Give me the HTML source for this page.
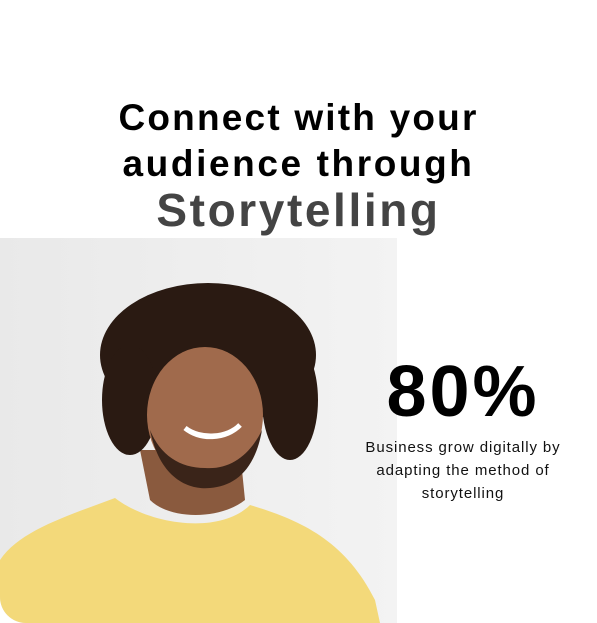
<!DOCTYPE html>
<html><head><style>
html,body{margin:0;padding:0;background:#fff;width:597px;height:623px;overflow:hidden;position:relative;font-family:"Liberation Sans",sans-serif}
.h{position:absolute;left:0;width:597px;text-align:center;font-weight:bold;color:#000;white-space:nowrap}
</style></head><body>
<div style="position:absolute;left:0;top:238px;width:397px;height:385px;background:#eeeeee;border-bottom-left-radius:26px;overflow:hidden">
<svg width="397" height="385" viewBox="0 238 397 385">
<defs><linearGradient id="bg" x1="0" x2="1"><stop offset="0" stop-color="#e9e9e9"/><stop offset="1" stop-color="#f3f3f3"/></linearGradient></defs>
<rect x="0" y="238" width="397" height="385" fill="url(#bg)"/>
<path d="M0 560 C20 530 70 515 115 498 C150 525 220 535 250 505 C300 520 345 540 375 600 L380 623 L0 623 Z" fill="#f3d97a"/>
<path d="M140 450 L150 500 C170 520 220 520 245 500 L240 450 Z" fill="#8a5a3e"/>
<ellipse cx="208" cy="355" rx="108" ry="72" fill="#2a1a12"/>
<ellipse cx="130" cy="400" rx="28" ry="55" fill="#2a1a12"/>
<ellipse cx="290" cy="400" rx="28" ry="60" fill="#2a1a12"/>
<ellipse cx="205" cy="415" rx="58" ry="68" fill="#a06a4c"/>
<path d="M150 430 C160 480 190 490 210 488 C235 486 255 470 262 430 C250 455 230 470 205 468 C180 468 160 455 150 430 Z" fill="#3a2419"/>
<path d="M185 428 C200 440 225 440 240 425 C228 438 200 440 185 428 Z" fill="#fff" stroke="#fff" stroke-width="5"/>
</svg>
</div>
<div class="h" style="top:96px;font-size:37px;line-height:44px;letter-spacing:2.2px">Connect with your</div>
<div class="h" style="top:142px;font-size:37px;line-height:44px;letter-spacing:2.6px">audience through</div>
<div class="h" style="top:183px;font-size:46px;line-height:54px;color:#444;letter-spacing:2.6px">Storytelling</div>
<div style="position:absolute;left:363px;width:200px;top:352px;text-align:center;font-weight:bold;font-size:72px;line-height:80px;color:#000;letter-spacing:3px">80%</div>
<div style="position:absolute;left:352px;width:222px;top:436px;text-align:center;font-size:15px;line-height:23px;color:#111;letter-spacing:0.9px">Business grow digitally by<br>adapting the method of<br>storytelling</div>
</body></html>
